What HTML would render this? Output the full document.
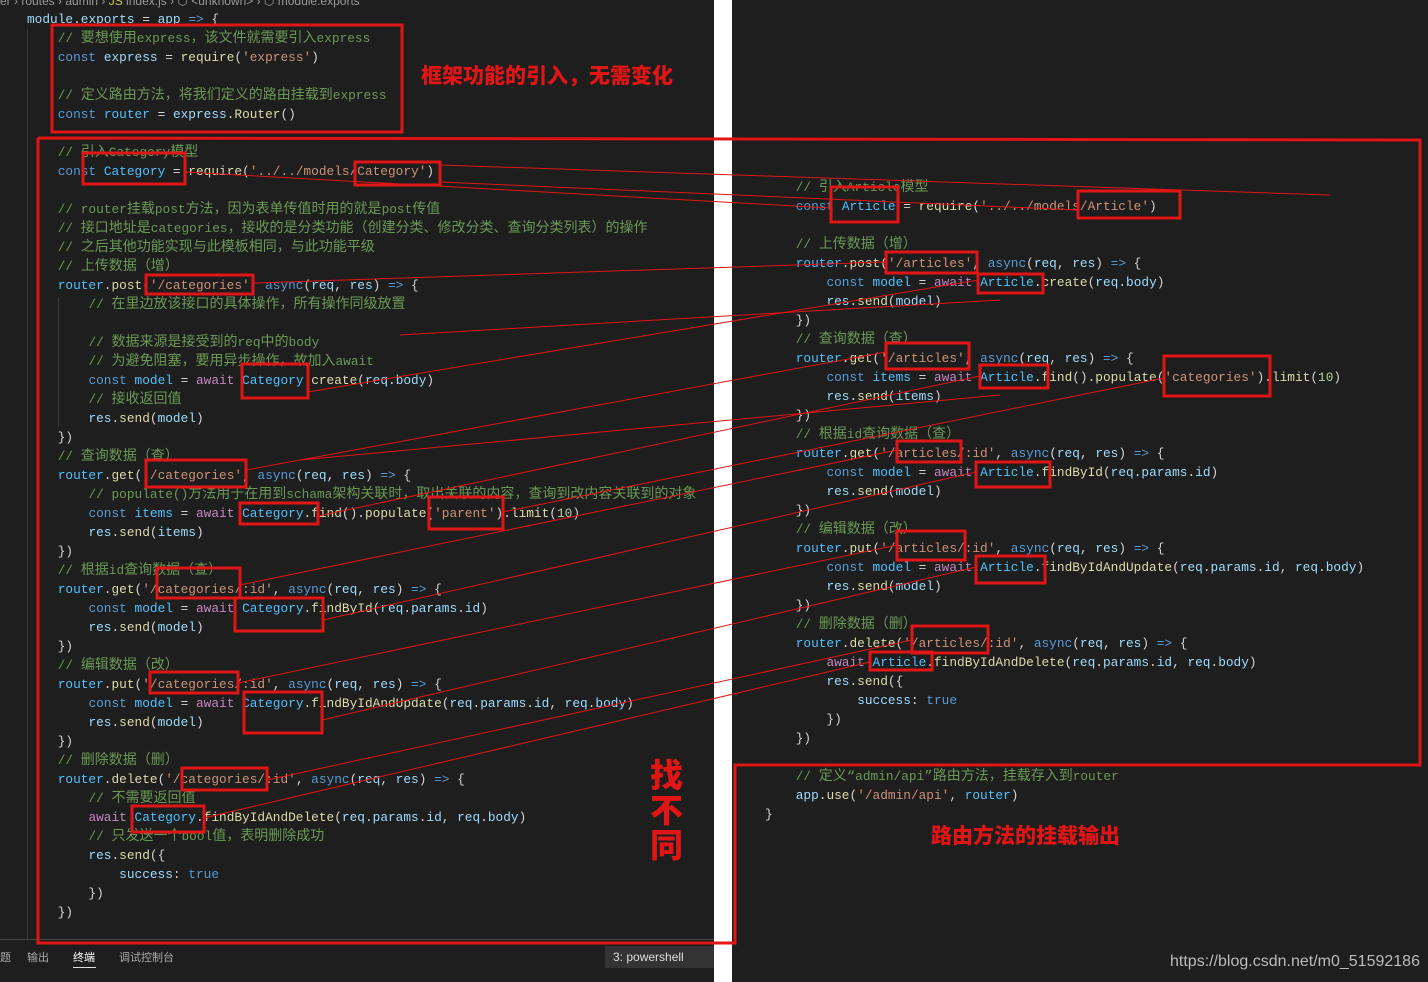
<!DOCTYPE html>
<html><head><meta charset="utf-8">
<style>
html,body{margin:0;padding:0;width:1428px;height:982px;overflow:hidden;background:#fff;}
.pane{position:absolute;top:0;background:#1e1e1e;height:982px;}
pre{position:absolute;margin:0;font-family:"Liberation Mono","Noto Sans CJK SC",monospace;font-size:12.8px;line-height:19px;color:#d4d4d4;white-space:pre;}
u{text-decoration:none;font-size:14px;line-height:0;}
.c{color:#6a9955}.k{color:#569cd6}.v{color:#9cdcfe}.s{color:#ce9178}.f{color:#dcdcaa}.a{color:#c586c0}.t{color:#4fc1ff}.n{color:#b5cea8}
.red{position:absolute;color:#e01515;font-family:"Noto Sans CJK SC",sans-serif;font-weight:900;}
.tab{position:absolute;top:949px;font-family:"Noto Sans CJK SC",sans-serif;font-size:11px;color:#aaa;}
</style></head><body>
<div class="pane" style="left:0;width:714px;"></div>
<div class="pane" style="left:732px;width:696px;"></div>
<div style="position:absolute;left:0;top:-6px;font-family:'Liberation Sans','Noto Sans CJK SC',sans-serif;font-size:12px;color:#999;">er › routes › admin › <span style="color:#cbcb41">JS</span> index.js › ⬡ &lt;unknown&gt; › ⬡ module.exports</div>
<div style="position:absolute;left:27px;top:29px;width:1px;height:910px;background:#3a3a3a"></div>
<div style="position:absolute;left:58px;top:297px;width:1px;height:130px;background:#3a3a3a"></div>
<div style="position:absolute;left:0;top:939px;width:714px;height:1px;background:#444"></div>
<pre style="left:27px;top:10px;"><span class="v">module</span>.<span class="v">exports</span> = <span class="v">app</span> <span class="k">=&gt;</span> {
    <span class="c">// <u>要想使用</u>express<u>，该文件就需要引入</u>express</span>
    <span class="k">const</span> <span class="v">express</span> = <span class="f">require</span>(<span class="s">'express'</span>)

    <span class="c">// <u>定义路由方法，将我们定义的路由挂载到</u>express</span>
    <span class="k">const</span> <span class="t">router</span> = <span class="v">express</span>.<span class="f">Router</span>()

    <span class="c">// <u>引入</u>Category<u>模型</u></span>
    <span class="k">const</span> <span class="t">Category</span> = <span class="f">require</span>(<span class="s">'../../models/Category'</span>)

    <span class="c">// router<u>挂载</u>post<u>方法，因为表单传值时用的就是</u>post<u>传值</u></span>
    <span class="c">// <u>接口地址是</u>categories<u>，接收的是分类功能（创建分类、修改分类、查询分类列表）的操作</u></span>
    <span class="c">// <u>之后其他功能实现与此模板相同，与此功能平级</u></span>
    <span class="c">// <u>上传数据（增）</u></span>
    <span class="t">router</span>.<span class="f">post</span>(<span class="s">'/categories'</span>, <span class="k">async</span>(<span class="v">req</span>, <span class="v">res</span>) <span class="k">=&gt;</span> {
        <span class="c">// <u>在里边放该接口的具体操作，所有操作同级放置</u></span>

        <span class="c">// <u>数据来源是接受到的</u>req<u>中的</u>body</span>
        <span class="c">// <u>为避免阻塞，要用异步操作，故加入</u>await</span>
        <span class="k">const</span> <span class="t">model</span> = <span class="a">await</span> <span class="t">Category</span>.<span class="f">create</span>(<span class="v">req</span>.<span class="v">body</span>)
        <span class="c">// <u>接收返回值</u></span>
        <span class="v">res</span>.<span class="f">send</span>(<span class="v">model</span>)
    })
    <span class="c">// <u>查询数据（查）</u></span>
    <span class="t">router</span>.<span class="f">get</span>(<span class="s">'/categories'</span>, <span class="k">async</span>(<span class="v">req</span>, <span class="v">res</span>) <span class="k">=&gt;</span> {
        <span class="c">// populate()<u>方法用于在用到</u>schama<u>架构关联时，取出关联的内容，查询到改内容关联到的对象</u></span>
        <span class="k">const</span> <span class="t">items</span> = <span class="a">await</span> <span class="t">Category</span>.<span class="f">find</span>().<span class="f">populate</span>(<span class="s">'parent'</span>).<span class="f">limit</span>(<span class="n">10</span>)
        <span class="v">res</span>.<span class="f">send</span>(<span class="v">items</span>)
    })
    <span class="c">// <u>根据</u>id<u>查询数据（查）</u></span>
    <span class="t">router</span>.<span class="f">get</span>(<span class="s">'/categories/:id'</span>, <span class="k">async</span>(<span class="v">req</span>, <span class="v">res</span>) <span class="k">=&gt;</span> {
        <span class="k">const</span> <span class="t">model</span> = <span class="a">await</span> <span class="t">Category</span>.<span class="f">findById</span>(<span class="v">req</span>.<span class="v">params</span>.<span class="v">id</span>)
        <span class="v">res</span>.<span class="f">send</span>(<span class="v">model</span>)
    })
    <span class="c">// <u>编辑数据（改）</u></span>
    <span class="t">router</span>.<span class="f">put</span>(<span class="s">'/categories/:id'</span>, <span class="k">async</span>(<span class="v">req</span>, <span class="v">res</span>) <span class="k">=&gt;</span> {
        <span class="k">const</span> <span class="t">model</span> = <span class="a">await</span> <span class="t">Category</span>.<span class="f">findByIdAndUpdate</span>(<span class="v">req</span>.<span class="v">params</span>.<span class="v">id</span>, <span class="v">req</span>.<span class="v">body</span>)
        <span class="v">res</span>.<span class="f">send</span>(<span class="v">model</span>)
    })
    <span class="c">// <u>删除数据（删）</u></span>
    <span class="t">router</span>.<span class="f">delete</span>(<span class="s">'/categories/:id'</span>, <span class="k">async</span>(<span class="v">req</span>, <span class="v">res</span>) <span class="k">=&gt;</span> {
        <span class="c">// <u>不需要返回值</u></span>
        <span class="a">await</span> <span class="t">Category</span>.<span class="f">findByIdAndDelete</span>(<span class="v">req</span>.<span class="v">params</span>.<span class="v">id</span>, <span class="v">req</span>.<span class="v">body</span>)
        <span class="c">// <u>只发送一个</u>bool<u>值，表明删除成功</u></span>
        <span class="v">res</span>.<span class="f">send</span>({
            <span class="v">success</span>: <span class="k">true</span>
        })
    })</pre>
<pre style="left:765px;top:178px;">    <span class="c">// <u>引入</u>Article<u>模型</u></span>
    <span class="k">const</span> <span class="t">Article</span> = <span class="f">require</span>(<span class="s">'../../models/Article'</span>)

    <span class="c">// <u>上传数据（增）</u></span>
    <span class="t">router</span>.<span class="f">post</span>(<span class="s">'/articles'</span>, <span class="k">async</span>(<span class="v">req</span>, <span class="v">res</span>) <span class="k">=&gt;</span> {
        <span class="k">const</span> <span class="t">model</span> = <span class="a">await</span> <span class="t">Article</span>.<span class="f">create</span>(<span class="v">req</span>.<span class="v">body</span>)
        <span class="v">res</span>.<span class="f">send</span>(<span class="v">model</span>)
    })
    <span class="c">// <u>查询数据（查）</u></span>
    <span class="t">router</span>.<span class="f">get</span>(<span class="s">'/articles'</span>, <span class="k">async</span>(<span class="v">req</span>, <span class="v">res</span>) <span class="k">=&gt;</span> {
        <span class="k">const</span> <span class="t">items</span> = <span class="a">await</span> <span class="t">Article</span>.<span class="f">find</span>().<span class="f">populate</span>(<span class="s">'categories'</span>).<span class="f">limit</span>(<span class="n">10</span>)
        <span class="v">res</span>.<span class="f">send</span>(<span class="v">items</span>)
    })
    <span class="c">// <u>根据</u>id<u>查询数据（查）</u></span>
    <span class="t">router</span>.<span class="f">get</span>(<span class="s">'/articles/:id'</span>, <span class="k">async</span>(<span class="v">req</span>, <span class="v">res</span>) <span class="k">=&gt;</span> {
        <span class="k">const</span> <span class="t">model</span> = <span class="a">await</span> <span class="t">Article</span>.<span class="f">findById</span>(<span class="v">req</span>.<span class="v">params</span>.<span class="v">id</span>)
        <span class="v">res</span>.<span class="f">send</span>(<span class="v">model</span>)
    })
    <span class="c">// <u>编辑数据（改）</u></span>
    <span class="t">router</span>.<span class="f">put</span>(<span class="s">'/articles/:id'</span>, <span class="k">async</span>(<span class="v">req</span>, <span class="v">res</span>) <span class="k">=&gt;</span> {
        <span class="k">const</span> <span class="t">model</span> = <span class="a">await</span> <span class="t">Article</span>.<span class="f">findByIdAndUpdate</span>(<span class="v">req</span>.<span class="v">params</span>.<span class="v">id</span>, <span class="v">req</span>.<span class="v">body</span>)
        <span class="v">res</span>.<span class="f">send</span>(<span class="v">model</span>)
    })
    <span class="c">// <u>删除数据（删）</u></span>
    <span class="t">router</span>.<span class="f">delete</span>(<span class="s">'/articles/:id'</span>, <span class="k">async</span>(<span class="v">req</span>, <span class="v">res</span>) <span class="k">=&gt;</span> {
        <span class="a">await</span> <span class="t">Article</span>.<span class="f">findByIdAndDelete</span>(<span class="v">req</span>.<span class="v">params</span>.<span class="v">id</span>, <span class="v">req</span>.<span class="v">body</span>)
        <span class="v">res</span>.<span class="f">send</span>({
            <span class="v">success</span>: <span class="k">true</span>
        })
    })

    <span class="c">// <u>定义“</u>admin/api<u>”路由方法，挂载存入到</u>router</span>
    <span class="v">app</span>.<span class="f">use</span>(<span class="s">'/admin/api'</span>, <span class="t">router</span>)
}</pre>
<div class="tab" style="left:0">题</div>
<div class="tab" style="left:27px">输出</div>
<div class="tab" style="left:73px;color:#fff">终端</div>
<div style="position:absolute;left:73px;top:967px;width:23px;height:1px;background:#ddd"></div>
<div class="tab" style="left:119px">调试控制台</div>
<div style="position:absolute;left:605px;top:946px;width:109px;height:22px;background:#333;color:#ddd;font-family:'Liberation Sans',sans-serif;font-size:12px;line-height:22px;padding-left:8px;box-sizing:border-box;">3: powershell</div>
<div style="position:absolute;left:1170px;top:953px;font-family:'Liberation Sans',sans-serif;font-size:16px;color:#bbb;">https://blog.csdn.net/m0_51592186</div>
<svg style="position:absolute;left:0;top:0" width="1428" height="982">
<g fill="none" stroke="#e01515" stroke-width="3">
<rect x="52" y="25" width="350" height="107"/>
<polyline points="38,138 1420,140 1420,765 735,765 735,943 38,943 38,138"/>
<rect x="83" y="153" width="102" height="31"/><rect x="355" y="162" width="85" height="23"/>
<rect x="146" y="275" width="107" height="19"/><rect x="242" y="364" width="66" height="34"/>
<rect x="146" y="460" width="100" height="27"/><rect x="240" y="503" width="78" height="21"/>
<rect x="429" y="497" width="74" height="32"/><rect x="157" y="568" width="83" height="30"/>
<rect x="235" y="598" width="88" height="33"/><rect x="150" y="672" width="88" height="21"/>
<rect x="244" y="692" width="78" height="41"/><rect x="182" y="768" width="85" height="22"/>
<rect x="132" y="806" width="72" height="26"/>
<rect x="831" y="187" width="67" height="35"/><rect x="1078" y="191" width="102" height="27"/>
<rect x="886" y="252" width="91" height="21"/><rect x="978" y="274" width="65" height="19"/>
<rect x="886" y="343" width="83" height="26"/><rect x="980" y="365" width="68" height="23"/>
<rect x="1164" y="356" width="106" height="40"/><rect x="897" y="441" width="64" height="21"/>
<rect x="976" y="462" width="74" height="25"/><rect x="897" y="531" width="68" height="29"/>
<rect x="976" y="556" width="69" height="27"/><rect x="912" y="626" width="76" height="27"/>
<rect x="870" y="652" width="62" height="18"/>
</g>
<g stroke="#e01515" stroke-width="1">
<line x1="440" y1="165" x2="1330" y2="195"/><line x1="185" y1="172" x2="831" y2="208"/>
<line x1="440" y1="182" x2="1078" y2="210"/><line x1="253" y1="283" x2="886" y2="262"/>
<line x1="308" y1="392" x2="978" y2="280"/><line x1="246" y1="470" x2="886" y2="352"/>
<line x1="318" y1="516" x2="980" y2="376"/><line x1="503" y1="512" x2="1164" y2="378"/>
<line x1="240" y1="585" x2="897" y2="450"/><line x1="323" y1="620" x2="976" y2="472"/>
<line x1="238" y1="683" x2="897" y2="545"/><line x1="322" y1="720" x2="976" y2="567"/>
<line x1="267" y1="780" x2="912" y2="640"/><line x1="204" y1="818" x2="870" y2="662"/>
<line x1="400" y1="335" x2="1000" y2="300"/><line x1="300" y1="460" x2="1000" y2="395"/>
</g>
</svg>
<div class="red" style="left:421px;top:60px;font-size:21px;">框架功能的引入，无需变化</div>
<div class="red" style="left:650px;top:756px;font-size:33px;line-height:35px;width:36px;">找<br>不<br>同</div>
<div class="red" style="left:931px;top:820px;font-size:21px;">路由方法的挂载输出</div>
</body></html>
